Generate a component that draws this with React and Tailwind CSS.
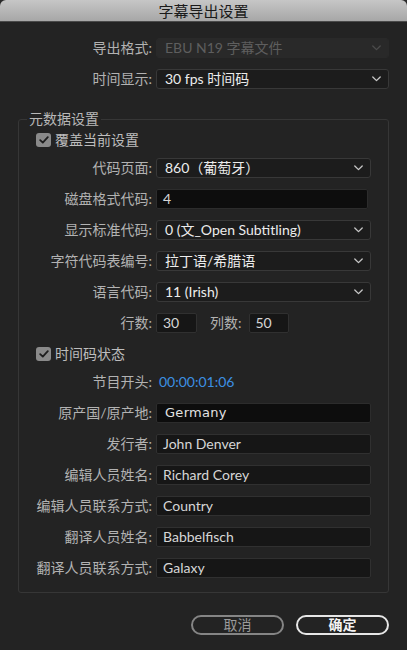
import React from 'react';

// Chevron used by every dropdown
const Chevron = ({ color = '#c8c8c8' }) => (
  <svg width="9" height="6" viewBox="0 0 9 6" fill="none">
    <path d="M0.8 1L4.5 4.6L8.2 1" stroke={color} strokeWidth="1.3" strokeLinecap="round" strokeLinejoin="round" />
  </svg>
);

const Select = ({ value, disabled = false }) => (
  <div
    className={
      disabled
        ? 'flex h-[20px] flex-1 items-center rounded-[3px] border border-[#292929] bg-[#292929] pl-[8px] pr-[7px] text-[#5e5e5e]'
        : 'flex h-[20px] flex-1 items-center rounded-[3px] border border-[#383838] bg-[#1c1c1c] pl-[8px] pr-[7px] text-[#ececec]'
    }
  >
    <span className="flex-1">{value}</span>
    <Chevron color={disabled ? '#4c4c4c' : '#c8c8c8'} />
  </div>
);

const TextInput = ({ value, dark = false, className = '' }) => (
  <div
    className={
      (dark
        ? 'flex h-[20px] items-center rounded-[2px] border border-[#2c2c2c] bg-[#0d0d0d] pl-[6px] text-[#d6d6d6] '
        : 'flex h-[20px] items-center rounded-[2px] border border-[#303030] bg-[#161616] pl-[6px] text-[#d6d6d6] ') + className
    }
  >
    {value}
  </div>
);

const Row = ({ label, wide = false, children }) => (
  <div className="flex h-[20px] items-center gap-[4px]">
    <span className={wide ? 'w-[134px] shrink-0 text-right text-[#b2b2b2]' : 'w-[133px] shrink-0 text-right text-[#b2b2b2]'}>
      {label}
    </span>
    {children}
  </div>
);

const Checkbox = ({ label, className = '' }) => (
  <div className={'ml-[17px] flex h-[14px] items-center gap-[4px] ' + className}>
    <span className="flex h-[14px] w-[15px] items-center justify-center rounded-[3px] bg-[#8a8a8a]">
      <svg width="10" height="8" viewBox="0 0 10 8" fill="none">
        <path d="M1.2 4.2L3.8 6.6L8.8 1.2" stroke="#1e1e1e" strokeWidth="1.8" strokeLinecap="round" strokeLinejoin="round" />
      </svg>
    </span>
    <span className="text-[#bdbdbd]">{label}</span>
  </div>
);

export default function App() {
  return (
    <div className="h-[650px] w-[407px] bg-[#2a2a2a] font-['Lato','Noto_Sans_CJK_SC',sans-serif] text-[14px] leading-[20px]">
      <div className="flex h-full flex-col overflow-hidden rounded-t-[6px] bg-[#232323]">
        {/* title bar */}
        <div className="flex h-[22px] shrink-0 items-center justify-center border-b border-[#4a4a4a] bg-gradient-to-b from-[#c6c6c6] to-[#a7a7a7]">
          <span className="text-[15px] text-[#1a1a1a]">字幕导出设置</span>
        </div>

        <div className="flex flex-col px-[18px] pt-[16px]">
          <div className="flex flex-col gap-[11px]">
            <Row label="导出格式:" wide>
              <Select value="EBU N19 字幕文件" disabled />
            </Row>
            <Row label="时间显示:" wide>
              <Select value="30 fps 时间码" />
            </Row>
          </div>

          <fieldset className="mt-[20px] flex flex-col gap-[11px] rounded-[3px] border border-[#363636] pb-[14px] pr-[17px] pt-[4px]">
            <legend className="ml-[8px] px-[2px] leading-[20px] text-[#b8b8b8]">元数据设置</legend>
            <Checkbox label="覆盖当前设置" />
            <Row label="代码页面:">
              <Select value="860（葡萄牙）" />
            </Row>
            <Row label="磁盘格式代码:">
              <TextInput value="4" dark className="mr-[3px] flex-1" />
            </Row>
            <Row label="显示标准代码:">
              <Select value="0 (文_Open Subtitling)" />
            </Row>
            <Row label="字符代码表编号:">
              <Select value="拉丁语/希腊语" />
            </Row>
            <Row label="语言代码:">
              <Select value="11 (Irish)" />
            </Row>
            <Row label="行数:">
              <TextInput value="30" className="w-[41px]" />
              <span className="ml-[9px] text-[#b2b2b2]">列数:</span>
              <TextInput value="50" className="ml-[3px] w-[40px]" />
            </Row>
            <Checkbox label="时间码状态" className="mt-[3px]" />
            <Row label="节目开头:">
              <span className="pl-[3px] text-[#3c90e2]">00:00:01:06</span>
            </Row>
            <Row label="原产国/原产地:">
              <TextInput
                value={<span className="font-['DejaVu_Sans',sans-serif] text-[13px] tracking-[0.3px] text-[#e2e2e2]">Germany</span>}
                dark
                className="flex-1 pl-[8px]"
              />
            </Row>
            <Row label="发行者:">
              <TextInput value="John Denver" className="flex-1" />
            </Row>
            <Row label="编辑人员姓名:">
              <TextInput value="Richard Corey" className="flex-1" />
            </Row>
            <Row label="编辑人员联系方式:">
              <TextInput value="Country" className="flex-1" />
            </Row>
            <Row label="翻译人员姓名:">
              <TextInput value="Babbelfisch" className="flex-1" />
            </Row>
            <Row label="翻译人员联系方式:">
              <TextInput value="Galaxy" className="flex-1" />
            </Row>
          </fieldset>

          <div className="mt-[22px] flex justify-end gap-[12px]">
            <button className="flex h-[20px] w-[93px] items-center justify-center rounded-full border-2 border-[#858585] text-[#9a9a9a]">
              取消
            </button>
            <button className="flex h-[20px] w-[93px] items-center justify-center rounded-full border-2 border-[#e6e6e6] font-semibold text-[#f2f2f2]">
              确定
            </button>
          </div>
        </div>
      </div>
    </div>
  );
}
